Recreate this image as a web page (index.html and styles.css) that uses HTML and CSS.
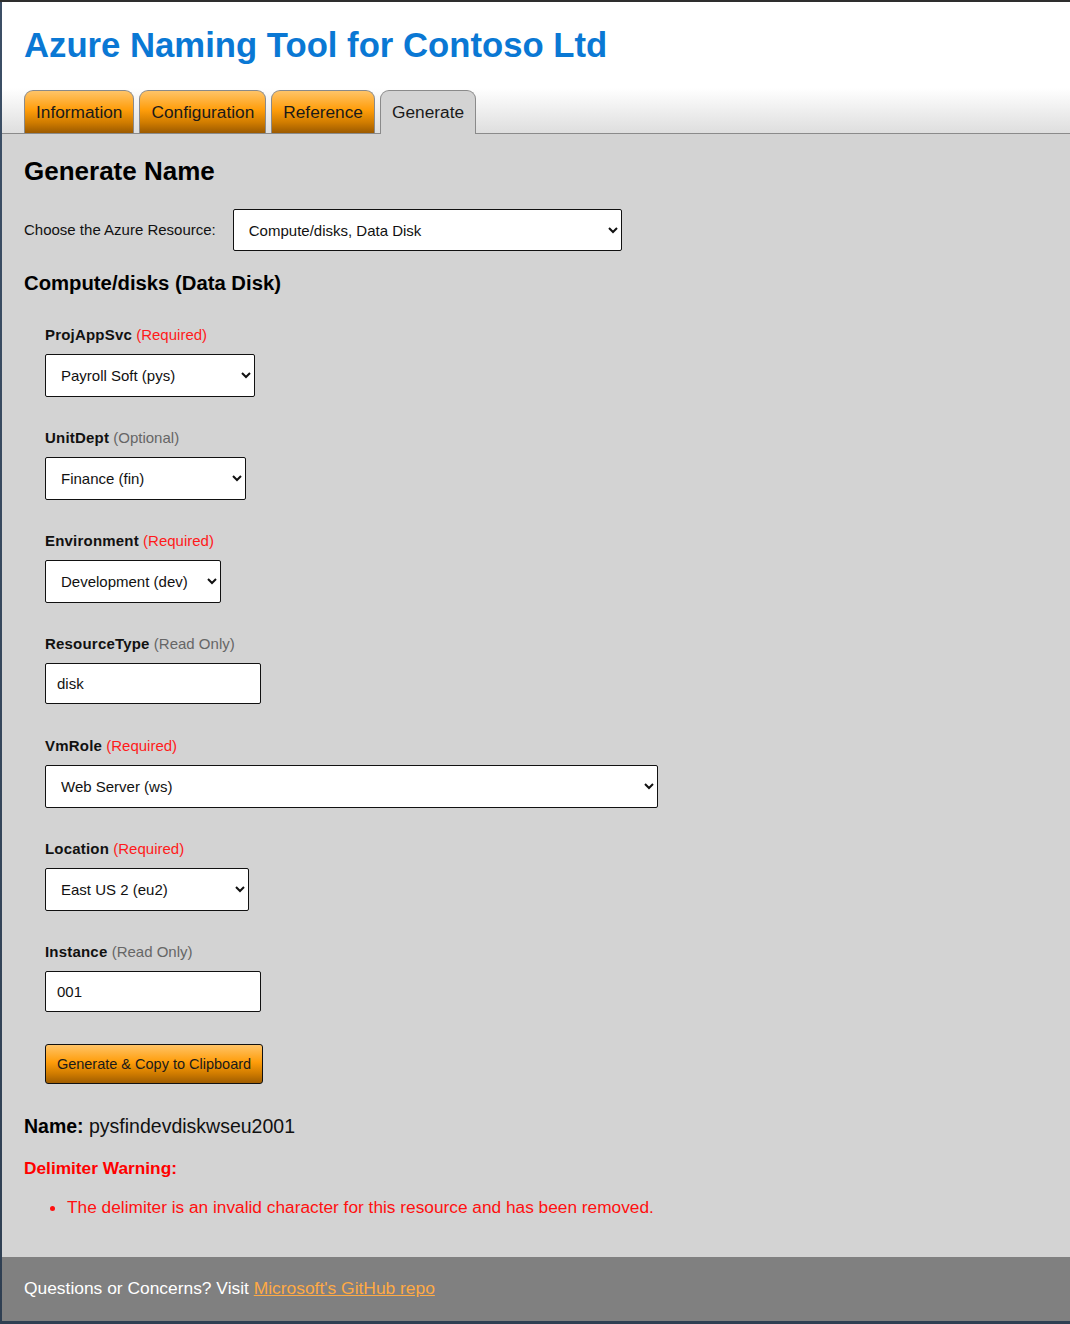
FILE: index.html
```html
<!DOCTYPE html>
<html lang="en">
<head>
<meta charset="utf-8">
<title>Azure Naming Tool</title>
<link rel="stylesheet" href="styles.css">
</head>
<body>
<div class="window">
  <header class="header">
    <h1 class="title">Azure Naming Tool for Contoso Ltd</h1>
    <nav class="tabs">
      <a class="tab">Information</a>
      <a class="tab">Configuration</a>
      <a class="tab">Reference</a>
      <a class="tab tab-active">Generate</a>
    </nav>
  </header>
  <main class="content">
    <h2 class="page-title">Generate Name</h2>
    <div class="choose-row">
      <span class="choose-label">Choose the Azure Resource:</span>
      <select class="field-select sel-resource"><option>Compute/disks, Data Disk</option></select>
    </div>
    <h3 class="resource-title">Compute/disks (Data Disk)</h3>
    <div class="groups">
      <div class="group">
        <div class="label"><b>ProjAppSvc</b> <span class="req">(Required)</span></div>
        <select class="field-select sel-proj"><option>Payroll Soft (pys)</option></select>
      </div>
      <div class="group">
        <div class="label"><b>UnitDept</b> <span class="opt">(Optional)</span></div>
        <select class="field-select sel-unit"><option>Finance (fin)</option></select>
      </div>
      <div class="group">
        <div class="label"><b>Environment</b> <span class="req">(Required)</span></div>
        <select class="field-select sel-env"><option>Development (dev)</option></select>
      </div>
      <div class="group group-wide">
        <div class="label"><b>ResourceType</b> <span class="opt">(Read Only)</span></div>
        <input class="field-input" type="text" value="disk" readonly>
      </div>
      <div class="group">
        <div class="label"><b>VmRole</b> <span class="req">(Required)</span></div>
        <select class="field-select sel-vm"><option>Web Server (ws)</option></select>
      </div>
      <div class="group">
        <div class="label"><b>Location</b> <span class="req">(Required)</span></div>
        <select class="field-select sel-loc"><option>East US 2 (eu2)</option></select>
      </div>
      <div class="group">
        <div class="label"><b>Instance</b> <span class="opt">(Read Only)</span></div>
        <input class="field-input" type="text" value="001" readonly>
      </div>
      <button class="gen-btn" type="button">Generate &amp; Copy to Clipboard</button>
    </div>
    <p class="name-line"><b>Name:</b> pysfindevdiskwseu2001</p>
    <p class="warn-title">Delimiter Warning:</p>
    <ul class="warn-list">
      <li>The delimiter is an invalid character for this resource and has been removed.</li>
    </ul>
  </main>
  <footer class="footer">
    Questions or Concerns? Visit <a class="footer-link" href="#">Microsoft's GitHub repo</a>
  </footer>
</div>
</body>
</html>
```
FILE: styles.css
```css
html {
  background: #4a4a3c;
}
body {
  margin: 0;
  font-family: "Liberation Sans", Arial, sans-serif;
  color: #111;
  background: linear-gradient(to bottom, #2e2e2e 0, #2e2e2e 2px, #3c4f66 2px, #2f3f52 100%);
  padding: 2px 0 3px 2px;
  min-height: 1319px;
  box-sizing: border-box;
}
.window {
  background: #d3d3d3;
  display: flex;
  flex-direction: column;
  min-height: 1319px;
}
.header {
  background: linear-gradient(to bottom, #ffffff 0, #ffffff 86px, #dedede 131px);
  padding: 23px 0 0 0;
  border-bottom: 1px solid #8a8a8a;
}
.title {
  margin: 0 0 25px 22px;
  font-size: 34.7px;
  line-height: 40px;
  font-weight: bold;
  color: #0a78d4;
}
.tabs {
  display: flex;
  gap: 5px;
  padding-left: 22px;
  margin-bottom: -1px;
}
.tab {
  height: 42px;
  line-height: 43px;
  padding: 0 11px;
  border: 1px solid #8a8a8a;
  border-bottom: none;
  border-radius: 9px 9px 0 0;
  font-size: 17.3px;
  color: #1a1a1a;
  background: linear-gradient(to bottom, #ffc468 0%, #ff9d0a 45%, #d07c00 75%, #9c5a00 100%);
  cursor: pointer;
}
.tab-active {
  background: #d3d3d3;
  height: 43px;
}
.content {
  flex: 1;
  padding: 22px 22px 40px 22px;
}
.page-title {
  margin: 0;
  font-size: 26px;
  line-height: 30px;
  font-weight: bold;
  color: #000;
}
.choose-row {
  display: flex;
  align-items: center;
  margin-top: 23px;
}
.choose-label {
  font-size: 15px;
  margin-right: 17px;
  position: relative;
  top: -1px;
}
.field-select {
  height: 42px;
  border: 1px solid #111;
  border-radius: 2px;
  background-color: #fff;
  font-family: "Liberation Sans", Arial, sans-serif;
  font-size: 15px;
  color: #111;
  padding: 0 8px 0 11px;
  box-sizing: border-box;
}
.sel-resource { width: 389px; }
.sel-proj { width: 210px; height: 43px; }
.sel-unit { width: 201px; height: 43px; }
.sel-env { width: 176px; height: 43px; }
.sel-vm { width: 613px; height: 43px; }
.sel-loc { width: 204px; height: 43px; }
.resource-title {
  margin: 20px 0 0 0;
  font-size: 20.3px;
  line-height: 24px;
  font-weight: bold;
  color: #000;
}
.groups {
  padding: 31px 0 0 21px;
  display: flex;
  flex-direction: column;
  align-items: flex-start;
}
.group {
  display: flex;
  flex-direction: column;
  align-items: flex-start;
  gap: 10px;
  margin-bottom: 32px;
}
.group-wide {
  margin-bottom: 33px;
}
.label {
  font-size: 15px;
  line-height: 18px;
  color: #111;
}
.label b {
  font-weight: bold;
  letter-spacing: 0.2px;
}
.req { color: #ff1a1a; }
.opt { color: #666; }
.field-input {
  width: 216px;
  height: 41px;
  box-sizing: border-box;
  border: 1px solid #111;
  border-radius: 2px;
  background: #fff;
  padding: 0 11px;
  font-family: "Liberation Sans", Arial, sans-serif;
  font-size: 15px;
  color: #111;
}
.gen-btn {
  width: 218px;
  height: 40px;
  border: 1px solid #111;
  border-radius: 3px;
  background: linear-gradient(to bottom, #ffc468 0%, #ff9d0a 45%, #d07c00 75%, #a05d00 100%);
  font-family: "Liberation Sans", Arial, sans-serif;
  font-size: 14.5px;
  color: #1a1a1a;
  padding: 0;
}
.name-line {
  margin: 30px 0 0 0;
  font-size: 19.5px;
  line-height: 24px;
  color: #111;
}
.name-line b { color: #000; }
.warn-title {
  margin: 20px 0 0 0;
  font-size: 17.3px;
  line-height: 20px;
  font-weight: bold;
  color: #ff0000;
}
.warn-list {
  margin: 19px 0 0 0;
  padding-left: 43px;
  font-size: 17.3px;
  line-height: 20px;
  color: #ff1010;
}
.footer {
  background: #808080;
  height: 64px;
  line-height: 63px;
  padding: 0 22px;
  font-size: 17.4px;
  color: #fff;
}
.footer-link {
  color: #ffaa44;
  text-decoration: underline;
}
```
